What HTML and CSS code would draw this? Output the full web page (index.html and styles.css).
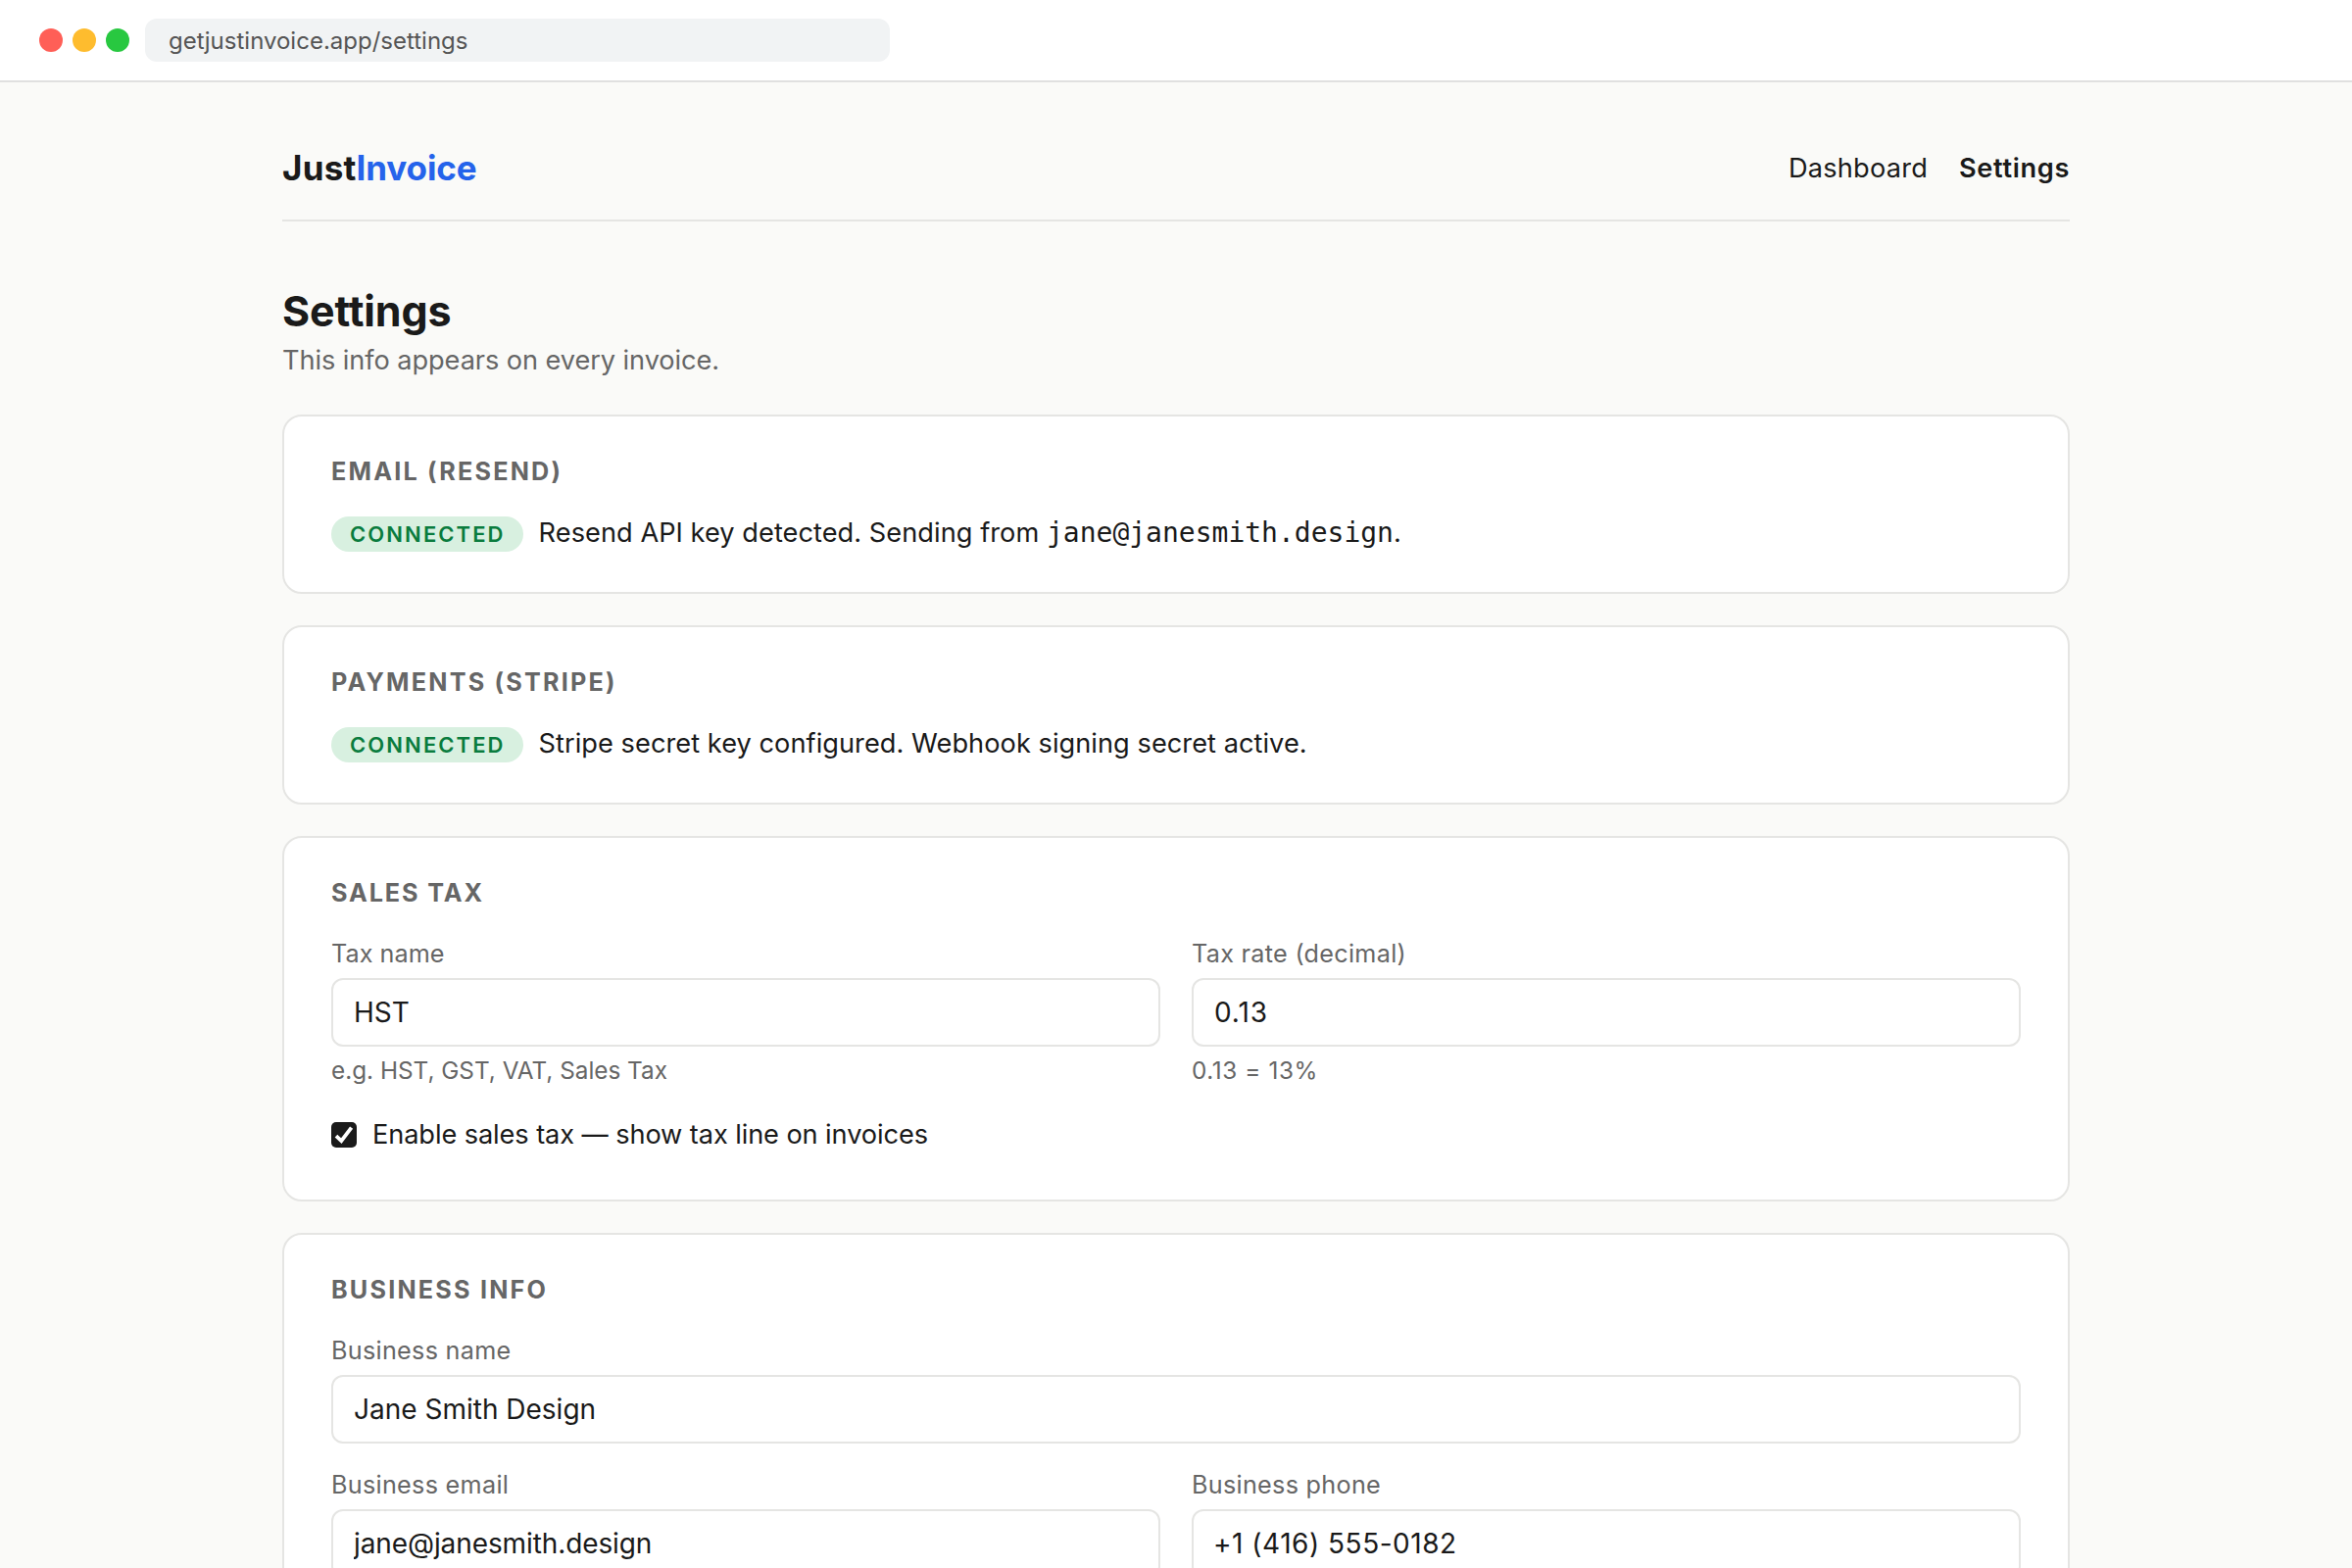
FILE: index.html
```html
<!DOCTYPE html>
<html lang="en">
<head>
  <meta charset="UTF-8">
  <title>Settings - JustInvoice</title>
  <link rel="stylesheet" href="styles.css">
</head>
<body>

<div class="chrome">
  <span class="dot red"></span>
  <span class="dot yellow"></span>
  <span class="dot green"></span>
  <div class="url">getjustinvoice.app/settings</div>
</div>

<div class="container">
  <header class="header">
    <a class="logo">Just<span>Invoice</span></a>
    <nav class="nav">
      <a>Dashboard</a>
      <a class="active">Settings</a>
    </nav>
  </header>

  <h1>Settings</h1>
  <p class="sub">This info appears on every invoice.</p>

  <section class="card">
    <h2>Email (Resend)</h2>
    <div class="status">
      <span class="badge">Connected</span>
      <span class="status-text">Resend API key detected. Sending from <code>jane@janesmith.design</code>.</span>
    </div>
  </section>

  <section class="card">
    <h2>Payments (Stripe)</h2>
    <div class="status">
      <span class="badge">Connected</span>
      <span class="status-text">Stripe secret key configured. Webhook signing secret active.</span>
    </div>
  </section>

  <section class="card">
    <h2 class="tight">Sales Tax</h2>
    <div class="row">
      <div class="field">
        <label class="short" for="tax-name">Tax name</label>
        <input id="tax-name" type="text" value="HST">
        <p class="hint">e.g. HST, GST, VAT, Sales Tax</p>
      </div>
      <div class="field">
        <label for="tax-rate">Tax rate (decimal)</label>
        <input id="tax-rate" class="rate" type="text" value="0.13">
        <p class="hint num">0.13 = 13%</p>
      </div>
    </div>
    <label class="check">
      <svg class="box" viewBox="0 0 26 26">
        <rect width="26" height="26" rx="5" fill="#1a1a1a"/>
        <path d="M5 14.2 L10.3 19.2 L20.6 5.6" fill="none" stroke="#fff" stroke-width="3.8"/>
      </svg>
      <span>Enable sales tax — show tax line on invoices</span>
    </label>
  </section>

  <section class="card last">
    <h2>Business Info</h2>
    <div class="field">
      <label for="biz-name">Business name</label>
      <input id="biz-name" type="text" value="Jane Smith Design">
    </div>
    <div class="row second">
      <div class="field">
        <label for="biz-email">Business email</label>
        <input id="biz-email" class="email" type="text" value="jane@janesmith.design">
      </div>
      <div class="field">
        <label for="biz-phone">Business phone</label>
        <input id="biz-phone" class="phone" type="text" value="+1 (416) 555-0182">
      </div>
    </div>
  </section>
</div>

</body>
</html>
```
FILE: styles.css
```css
* {
  box-sizing: border-box;
  margin: 0;
  padding: 0;
}

body {
  height: 1600px;
  overflow: hidden;
  background: #fafaf8;
  color: #1a1a1a;
  font-family: Inter, "Liberation Sans", sans-serif;
  font-size: 27.2px;
}

/* browser bar */
.chrome {
  display: flex;
  align-items: center;
  gap: 10px;
  height: 84px;
  padding: 0 40px;
  background: #fff;
  border-bottom: 2px solid #e0e0e0;
}
.dot {
  width: 24px;
  height: 24px;
  border-radius: 50%;
}
.red { background: #ff5f57; }
.yellow { background: #febc2e; }
.green { background: #28c840; }
.url {
  width: 760px;
  height: 44px;
  margin-left: 6px;
  padding: 0 24px;
  border-radius: 12px;
  background: #f1f3f4;
  color: #555;
  font-size: 24px;
  line-height: 45px;
}

/* page area under the bar, cut off at the window edge */
.container {
  width: 1824px;
  height: 1516px;
  margin: 0 auto;
  padding-top: 65px;
  overflow: hidden;
}

.header {
  display: flex;
  justify-content: space-between;
  align-items: center;
  padding-bottom: 31px;
  border-bottom: 2px solid #e5e5e3;
}
.logo {
  font-size: 35px;
  font-weight: 700;
  line-height: 44px;
  letter-spacing: 0.2px;
}
.logo span {
  color: #2563eb;
  letter-spacing: -0.1px;
}
.nav {
  display: flex;
  gap: 32px;
  letter-spacing: 0.2px;
}
.nav .active {
  font-weight: 600;
  letter-spacing: 0.65px;
}

h1 {
  margin-top: 65px;
  font-size: 43px;
  font-weight: 700;
  line-height: 52px;
  letter-spacing: -0.12px;
}
.sub {
  margin-top: 3px;
  margin-bottom: 33px;
  color: #666;
  line-height: 44px;
  letter-spacing: -0.08px;
}

.card {
  margin-bottom: 32px;
  padding: 38px 48px 40px;
  background: #fff;
  border: 2px solid #e5e5e3;
  border-radius: 20px;
}
h2 {
  margin-bottom: 27px;
  color: #666;
  font-size: 25.2px;
  font-weight: 700;
  line-height: 36px;
  letter-spacing: 2.2px;
  text-transform: uppercase;
}
h2.tight { letter-spacing: 1.9px; }

.status {
  display: flex;
  align-items: baseline;
  gap: 16px;
  height: 38px;
  line-height: 36px;
}
.badge {
  padding: 0 18px 0 19px;
  border-radius: 18px;
  background: #d8f0e0;
  color: #0a7c3e;
  font-size: 22px;
  font-weight: 600;
  letter-spacing: 2.09px;
  text-transform: uppercase;
}
.status-text { letter-spacing: 0.04px; }
code {
  font-family: "DejaVu Sans Mono", monospace;
  font-size: 28px;
  line-height: 1;
  letter-spacing: 0;
}

/* form */
.row {
  display: grid;
  grid-template-columns: 1fr 1fr;
  gap: 32px;
}
.row.second { margin-top: 25px; }
.field label {
  display: block;
  margin-bottom: 8px;
  color: #666;
  font-size: 25.2px;
  line-height: 34px;
  letter-spacing: 0.29px;
}
.field label.short { letter-spacing: 0.05px; }
input {
  display: block;
  width: 100%;
  height: 70px;
  padding: 0 21px;
  border: 2px solid #e5e5e3;
  border-radius: 12px;
  background: #fff;
  color: #1a1a1a;
  font-family: inherit;
  font-size: 28px;
}
.rate { letter-spacing: 0.9px; }
.email { letter-spacing: -0.1px; }
.phone {
  padding-left: 20px;
  letter-spacing: 0.52px;
}
.hint {
  margin-top: 8px;
  color: #666;
  font-size: 24.3px;
  line-height: 32px;
}
.hint.num { letter-spacing: 0.6px; }

.check {
  display: flex;
  align-items: center;
  gap: 16px;
  margin: 30px 0 6px;
  line-height: 40px;
  letter-spacing: -0.1px;
}
.box {
  width: 26px;
  height: 26px;
}

/* runs on below the fold */
.card.last {
  height: 400px;
  margin-bottom: 0;
}
```
